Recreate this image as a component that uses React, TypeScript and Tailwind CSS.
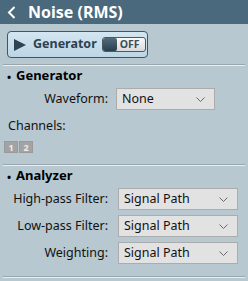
function Sep() {
  return (
    <div className="mx-[3px]">
      <div className="h-px bg-[#9ba6ab]" />
      <div className="h-px bg-[#e9eef1]" />
    </div>
  );
}

function Chevron() {
  return (
    <svg width="9" height="5" viewBox="0 0 9 5" className="shrink-0">
      <path d="M0.5 0.5 L4.5 4.5 L8.5 0.5" fill="none" stroke="#6a6a6a" strokeWidth="1" />
    </svg>
  );
}

function Select({ value, width }: { value: string; width: string }) {
  return (
    <div
      className={`${width} h-[22px] flex items-center justify-between pl-[5px] pr-[9px] bg-[#e2e2e2] border border-[#acacac] text-[12.5px] text-[#111]`}
    >
      <span>{value}</span>
      <Chevron />
    </div>
  );
}

function SectionHeader({ title }: { title: string }) {
  return (
    <div className="h-[20px] flex items-center pl-[7px] text-[13px] font-bold text-black">
      <span className="w-[9px] text-[11px] leading-none">•</span>
      <span>{title}</span>
    </div>
  );
}

export default function App() {
  return (
    <div
      className="w-[248px] h-[281px] bg-[#b7c8d0] overflow-hidden"
      style={{ fontFamily: '"Noto Sans", "Open Sans", sans-serif' }}
    >
      {/* title bar */}
      <div className="h-[24px] bg-[#4a697d] flex items-center">
        <svg width="9" height="13" viewBox="0 0 9 13" className="ml-[7px]">
          <path d="M7.5 1 L2 6.5 L7.5 12" fill="none" stroke="#ffffff" strokeWidth="2" />
        </svg>
        <span className="ml-[12px] text-white text-[16px] font-bold leading-none">Noise (RMS)</span>
      </div>

      {/* generator toggle */}
      <div className="pt-[7px] pl-[7px]">
        <div className="w-[141px] h-[27px] rounded-[4px] border-[1.5px] border-[#3c5868] bg-[linear-gradient(#d3e6f1,#bcd5e4)] flex items-center">
          <svg width="12" height="12" viewBox="0 0 12 12" className="ml-[6px]">
            <path d="M0 0 L12 6 L0 12 Z" fill="#2d4352" />
          </svg>
          <span className="ml-[7px] text-[12.5px] font-bold text-[#2c4252]">Generator</span>
          <div className="ml-[5px] w-[44px] h-[15px] rounded-[3px] border border-[#4a5a64] bg-[linear-gradient(#fafafa,#d9d9d9)] flex items-center">
            <div className="w-[14px] h-[13px] rounded-[2px] bg-[linear-gradient(#536b7b,#2b404e)]" />
            <span className="ml-[3px] text-[10.5px] font-bold leading-none text-[#3a4f5e]">OFF</span>
          </div>
        </div>
      </div>

      <div className="mt-[6px]">
        <Sep />
      </div>

      <SectionHeader title="Generator" />
      <div className="mt-[2px] flex items-center">
        <div className="w-[108px] text-right text-[12.5px] text-[#111]">Waveform:</div>
        <div className="ml-[8px]">
          <Select value="None" width="w-[99px]" />
        </div>
      </div>
      <div className="mt-[8px] h-[16px] leading-[16px] pl-[8px] text-[12.5px] text-[#111]">Channels:</div>
      <div className="mt-[7px] pl-[4px] flex gap-px">
        <div className="w-[14px] h-[12px] bg-[#a3a3a3] border border-[#9a9a9a] flex items-center justify-center text-[9px] font-bold text-[#ededed] leading-none">1</div>
        <div className="w-[14px] h-[12px] bg-[#a3a3a3] border border-[#9a9a9a] flex items-center justify-center text-[9px] font-bold text-[#ededed] leading-none">2</div>
      </div>

      <div className="mt-[11px]">
        <Sep />
      </div>

      <SectionHeader title="Analyzer" />
      <div className="mt-[2px] flex flex-col gap-[5px]">
        {["High-pass Filter:", "Low-pass Filter:", "Weighting:"].map((l) => (
          <div key={l} className="flex items-center">
            <div className="w-[108px] text-right text-[12.5px] text-[#111]">{l}</div>
            <div className="ml-[10px]">
              <Select value="Signal Path" width="w-[120px]" />
            </div>
          </div>
        ))}
      </div>

      <div className="mt-[12px]">
        <Sep />
      </div>
    </div>
  );
}
